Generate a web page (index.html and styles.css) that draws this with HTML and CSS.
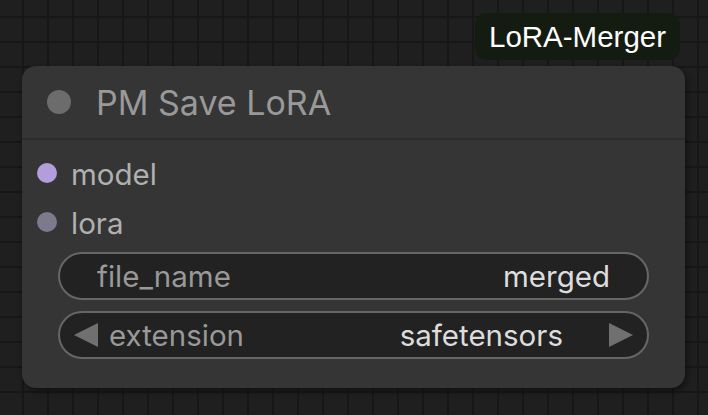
FILE: index.html
```html
<!DOCTYPE html>
<html lang="en">
  <head>
    <title>PM Save LoRA</title>
    <link rel="stylesheet" href="styles.css">
  </head>
  <body>
    <div class="canvas">
      <div class="group-badge">LoRA-Merger</div>

      <div class="node">
        <div class="node-title">
          <span class="title-dot"></span>
          <span class="title-text">PM Save LoRA</span>
        </div>

        <div class="node-body">
          <div class="slot">
            <span class="slot-dot model"></span>
            <span class="slot-name">model</span>
          </div>
          <div class="slot">
            <span class="slot-dot lora"></span>
            <span class="slot-name">lora</span>
          </div>

          <div class="widgets">
            <div class="widget">
              <span class="w-label">file_name</span>
              <span class="w-value">merged</span>
            </div>
            <div class="widget combo">
              <svg class="arrow" width="24" height="24" viewBox="0 0 24 24">
                <polygon points="24,0 24,24 0,12" />
              </svg>
              <span class="w-label">extension</span>
              <span class="w-value">safetensors</span>
              <svg class="arrow" width="24" height="24" viewBox="0 0 24 24">
                <polygon points="0,0 0,24 24,12" />
              </svg>
            </div>
          </div>
        </div>
      </div>
    </div>
  </body>
</html>
```

FILE: styles.css
```css
* {
  box-sizing: border-box;
}
body {
  margin: 0;
  background: #1f1f1f;
  font-family: "Inter", "Liberation Sans", sans-serif;
}

/* graph canvas with the grid */
.canvas {
  position: relative;
  width: 708px;
  height: 415px;
  overflow: hidden;
  background-color: #1f1f1f;
  background-image:
    linear-gradient(to right, #171717 2px, transparent 2px),
    linear-gradient(to bottom, #171717 2px, transparent 2px);
  background-size: 25px 25px;
  background-position: 22px 16px;
}

.group-badge {
  position: absolute;
  left: 475px;
  top: 13px;
  width: 205px;
  height: 47px;
  border-radius: 11px;
  background: #141c12;
  color: #ffffff;
  font-family: "Liberation Sans", sans-serif;
  font-size: 29.5px;
  display: flex;
  align-items: center;
  justify-content: center;
}

/* the node itself */
.node {
  position: absolute;
  left: 22px;
  top: 66px;
  width: 663px;
  height: 322px;
  background: #353535;
  border-radius: 14px;
  box-shadow: 2px 3px 6px rgba(0, 0, 0, 0.45);
}
.node-title {
  height: 74px;
  display: flex;
  align-items: center;
  gap: 25px;
  padding-left: 25px;
  border-bottom: 2px solid #2c2c2c;
}
.title-dot {
  width: 24px;
  height: 24px;
  border-radius: 50%;
  background: #6c6c6c;
}
.title-text {
  color: #999999;
  font-size: 34px;
  margin-top: 1px;
}

.node-body {
  padding: 8px 36px 29px 0;
}
.slot {
  height: 49px;
  display: flex;
  align-items: center;
  gap: 14px;
  padding-left: 15px;
}
.slot-dot {
  width: 20px;
  height: 20px;
  border-radius: 50%;
}
.slot-dot.model {
  background: #b39ddb;
}
.slot-dot.lora {
  background: #7c7a8c;
}
.slot-name {
  color: #b0b0b0;
  font-size: 29.5px;
  margin-top: 3px;
}

.widgets {
  margin-top: 6px;
  margin-left: 36px;
  display: flex;
  flex-direction: column;
  gap: 11px;
}
.widget {
  height: 48px;
  border: 2px solid #666666;
  border-radius: 24px;
  background: #222222;
  display: flex;
  align-items: center;
  padding: 0 37px;
  font-size: 29.5px;
}
.widget.combo {
  padding: 0 14px;
}
.w-label {
  color: #999999;
  flex: 1;
}
.w-value {
  color: #dddddd;
}
.combo .w-label {
  margin-left: 11px;
}
.combo .w-value {
  margin-right: 46px;
}
.arrow {
  fill: #707070;
}
```
